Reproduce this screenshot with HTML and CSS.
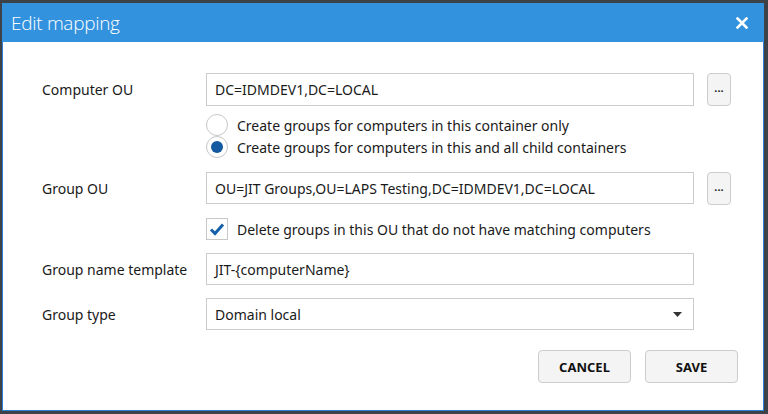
FILE: index.html
```html
<!DOCTYPE html>
<html>
<head>
<meta charset="utf-8">
<link rel="stylesheet" href="styles.css">
</head>
<body>
<div class="dialog">
  <div class="titlebar">
    <span class="title">Edit mapping</span>
    <svg class="close" width="12" height="12" viewBox="0 0 12 12"><path d="M1.5 1.5 L10.5 10.5 M10.5 1.5 L1.5 10.5" stroke="#fff" stroke-width="2.6" stroke-linecap="square"/></svg>
  </div>
  <div class="content">
    <div class="row r1">
      <label class="lbl">Computer OU</label>
      <div class="input">DC=IDMDEV1,DC=LOCAL</div>
      <button class="browse">...</button>
    </div>
    <div class="options">
      <div class="opt"><span class="radio"></span><span>Create groups for computers in this container only</span></div>
      <div class="opt"><span class="radio checked"></span><span>Create groups for computers in this and all child containers</span></div>
    </div>
    <div class="row r2">
      <label class="lbl">Group OU</label>
      <div class="input">OU=JIT Groups,OU=LAPS Testing,DC=IDMDEV1,DC=LOCAL</div>
      <button class="browse">...</button>
    </div>
    <div class="opt chk-row">
      <span class="checkbox"><svg width="16" height="14" viewBox="0 0 16 14"><path d="M2 7.5 L6 11.5 L14 2.5" fill="none" stroke="#1560a8" stroke-width="3"/></svg></span>
      <span>Delete groups in this OU that do not have matching computers</span>
    </div>
    <div class="row r3">
      <label class="lbl">Group name template</label>
      <div class="input">JIT-{computerName}</div>
    </div>
    <div class="row r4">
      <label class="lbl">Group type</label>
      <div class="input select">Domain local<svg class="caret" width="9" height="5" viewBox="0 0 9 5"><path d="M0 0 H9 L4.5 5 Z" fill="#333"/></svg></div>
    </div>
    <div class="actions">
      <button class="btn">CANCEL</button>
      <button class="btn">SAVE</button>
    </div>
  </div>
</div>
</body>
</html>
```

FILE: styles.css
```css
html, body {
  margin: 0;
  padding: 0;
  background: #3d4148;
  width: 768px;
  height: 414px;
  overflow: hidden;
}
body {
  padding: 3px 0 0 2px;
  box-sizing: border-box;
  font-family: "Segoe UI", "Noto Sans", sans-serif;
  color: #1a1a1a;
}
.dialog {
  width: 762px;
  height: 408px;
  box-sizing: border-box;
  background: #fff;
  border: 1px solid #2b7fd4;
  border-top: none;
  display: flex;
  flex-direction: column;
}
.titlebar {
  height: 39px;
  background: #3292de;
  margin: 0 -1px;
  display: flex;
  align-items: center;
  justify-content: space-between;
  padding: 0 16px 0 9px;
}
.title {
  color: #fff;
  font-family: "Open Sans", "Noto Sans", sans-serif;
  font-size: 19px;
  font-weight: 300;
  letter-spacing: -0.3px;
}
.close { display: block; }
.content {
  padding: 31px 0 0 39px;
  font-size: 14px;
}
.row {
  display: flex;
  align-items: center;
  height: 33px;
}
.lbl {
  width: 164px;
  flex: none;
}
.input {
  width: 488px;
  height: 33px;
  box-sizing: border-box;
  border: 1px solid #cccccc;
  padding: 0 8px;
  display: flex;
  align-items: center;
  flex: none;
}
.r2 .input, .r3 .input, .r4 .input { height: 32px; }
.r2, .r3, .r4 { height: 32px; }
.browse {
  margin-left: 13px;
  width: 24px;
  height: 33px;
  border: 1px solid #cccccc;
  border-radius: 4px;
  background: #f4f4f4;
  font-family: inherit;
  font-weight: bold;
  font-size: 11px;
  padding: 0 0 4px 0;
  color: #222;
}
.options {
  margin: 8px 0 0 164px;
  display: flex;
  flex-direction: column;
}
.opt {
  display: flex;
  align-items: center;
  height: 22px;
}
.radio {
  width: 22px;
  height: 22px;
  border: 1px solid #c8c8c8;
  border-radius: 50%;
  box-sizing: border-box;
  margin-right: 9px;
  position: relative;
  background: #fff;
  flex: none;
}
.radio.checked::after {
  content: "";
  position: absolute;
  left: 4px;
  top: 4px;
  width: 12px;
  height: 12px;
  border-radius: 50%;
  background: #135aa0;
}
.r2 { margin-top: 14px; }
.chk-row {
  margin: 14px 0 0 164px;
}
.checkbox {
  width: 22px;
  height: 22px;
  border: 1px solid #c8c8c8;
  box-sizing: border-box;
  margin-right: 9px;
  display: flex;
  align-items: center;
  justify-content: center;
  flex: none;
}
.r3 { margin-top: 13px; }
.r4 { margin-top: 13px; }
.select {
  justify-content: space-between;
  padding-right: 11px;
}
.caret { display: block; }
.actions {
  display: flex;
  justify-content: flex-end;
  gap: 14px;
  margin: 20px 25px 0 0;
}
.btn {
  width: 93px;
  height: 33px;
  border: 1px solid #cccccc;
  border-radius: 4px;
  background: #f4f4f4;
  font-family: inherit;
  font-weight: bold;
  font-size: 13px;
  color: #111;
}
```
